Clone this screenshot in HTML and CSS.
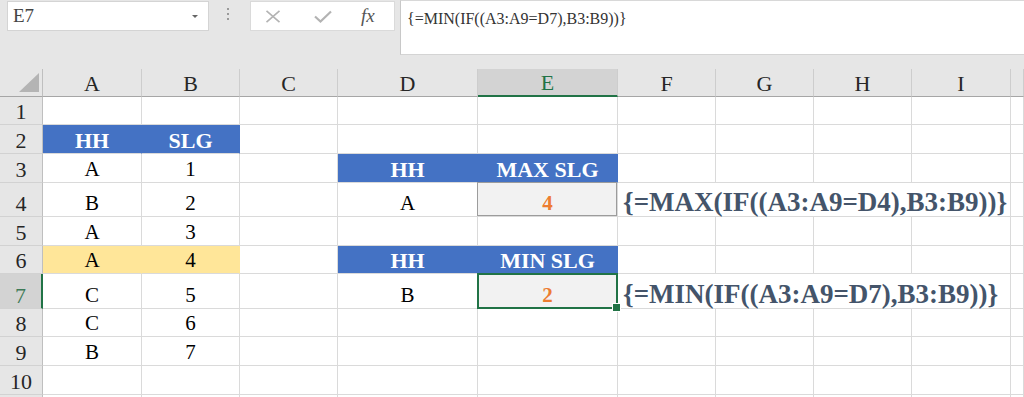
FILE: index.html
```html
<!DOCTYPE html>
<html>
<head>
<meta charset="utf-8">
<link rel="stylesheet" href="styles.css">
</head>
<body>
<div class="topbar">
  <div class="namebox"><span class="nb-text">E7</span><span class="nb-arrow"></span></div>
  <div class="grip"><i></i><i></i><i></i></div>
  <div class="fxbox">
    <svg class="ico-x" width="16" height="13" viewBox="0 0 16 13"><path d="M1.5 0.8 L14.5 12.2 M14.5 0.8 L1.5 12.2" stroke="#b3b3b3" stroke-width="1.6" fill="none"/></svg>
    <svg class="ico-ok" width="18" height="13" viewBox="0 0 18 13"><path d="M1 6.5 L6.5 11.5 L17 1.5" stroke="#b3b3b3" stroke-width="2.2" fill="none"/></svg>
    <span class="fx">fx</span>
  </div>
  <div class="formula">{=MIN(IF((A3:A9=D7),B3:B9))}</div>
</div>

<div class="sheet">
  <!-- header row -->
  <div class="ch corner"><span class="tri"></span></div>
  <div class="ch">A</div><div class="ch">B</div><div class="ch">C</div><div class="ch">D</div>
  <div class="ch ch-sel">E</div><div class="ch">F</div><div class="ch">G</div><div class="ch">H</div><div class="ch">I</div><div class="ch"></div>

  <!-- row 1 -->
  <div class="rh">1</div>
  <div class="c"></div><div class="c"></div><div class="c"></div><div class="c"></div><div class="c"></div><div class="c"></div><div class="c"></div><div class="c"></div><div class="c"></div><div class="c"></div>

  <!-- row 2 -->
  <div class="rh">2</div>
  <div class="c blue">HH</div><div class="c blue">SLG</div><div class="c"></div><div class="c"></div><div class="c"></div><div class="c"></div><div class="c"></div><div class="c"></div><div class="c"></div><div class="c"></div>

  <!-- row 3 -->
  <div class="rh">3</div>
  <div class="c">A</div><div class="c">1</div><div class="c"></div><div class="c blue">HH</div><div class="c blue">MAX SLG</div><div class="c"></div><div class="c"></div><div class="c"></div><div class="c"></div><div class="c"></div>

  <!-- row 4 -->
  <div class="rh">4</div>
  <div class="c">B</div><div class="c">2</div><div class="c"></div><div class="c">A</div><div class="c result boxed">4</div><div class="c fcell">{=MAX(IF((A3:A9=D4),B3:B9))}</div><div class="c"></div>

  <!-- row 5 -->
  <div class="rh">5</div>
  <div class="c">A</div><div class="c">3</div><div class="c"></div><div class="c"></div><div class="c"></div><div class="c"></div><div class="c"></div><div class="c"></div><div class="c"></div><div class="c"></div>

  <!-- row 6 -->
  <div class="rh">6</div>
  <div class="c yellow">A</div><div class="c yellow">4</div><div class="c"></div><div class="c blue">HH</div><div class="c blue">MIN SLG</div><div class="c"></div><div class="c"></div><div class="c"></div><div class="c"></div><div class="c"></div>

  <!-- row 7 -->
  <div class="rh rh-sel">7</div>
  <div class="c">C</div><div class="c">5</div><div class="c"></div><div class="c">B</div><div class="c result selected">2</div><div class="c fcell">{=MIN(IF((A3:A9=D7),B3:B9))}</div><div class="c"></div>

  <!-- row 8 -->
  <div class="rh">8</div>
  <div class="c">C</div><div class="c">6</div><div class="c"></div><div class="c"></div><div class="c"></div><div class="c"></div><div class="c"></div><div class="c"></div><div class="c"></div><div class="c"></div>

  <!-- row 9 -->
  <div class="rh">9</div>
  <div class="c">B</div><div class="c">7</div><div class="c"></div><div class="c"></div><div class="c"></div><div class="c"></div><div class="c"></div><div class="c"></div><div class="c"></div><div class="c"></div>

  <!-- row 10 -->
  <div class="rh">10</div>
  <div class="c"></div><div class="c"></div><div class="c"></div><div class="c"></div><div class="c"></div><div class="c"></div><div class="c"></div><div class="c"></div><div class="c"></div><div class="c"></div>

  <!-- row 11 (only its top edge is visible) -->
  <div class="rh"></div>
  <div class="c"></div><div class="c"></div><div class="c"></div><div class="c"></div><div class="c"></div><div class="c"></div><div class="c"></div><div class="c"></div><div class="c"></div><div class="c"></div>
</div>
</body>
</html>
```
FILE: styles.css
```css
* { box-sizing: border-box; }

body {
  margin: 0;
  width: 1024px;
  height: 397px;
  overflow: hidden;
  background: #ffffff;
  font-family: "Liberation Serif", "Times New Roman", serif;
}

/* ---------- top bar ---------- */
.topbar {
  height: 69px;
  background: #e6e6e6;
  display: flex;
  align-items: flex-start;
}

.namebox {
  margin: 1px 0 0 7px;
  width: 202px;
  height: 30px;
  background: #fff;
  border: 1px solid #d4d4d4;
  display: flex;
  align-items: center;
  justify-content: space-between;
  padding: 0 10px 0 5px;
}

.nb-text {
  font-size: 19px;
  color: #444;
  line-height: 20px;
}

.nb-arrow {
  width: 0;
  height: 0;
  border-left: 3px solid transparent;
  border-right: 3px solid transparent;
  border-top: 3px solid #666;
}

.grip {
  margin: 8px 0 0 17px;
  width: 4px;
  display: flex;
  flex-direction: column;
  gap: 3px;
  align-items: center;
}

.grip i {
  width: 2px;
  height: 2px;
  background: #9a9a9a;
}

.fxbox {
  margin: 1px 0 0 20px;
  width: 145px;
  height: 30px;
  background: #fff;
  border: 1px solid #dadada;
  display: flex;
  align-items: center;
  padding-left: 14px;
}

.ico-x { margin-top: 0; }
.ico-ok { margin-left: 33px; margin-top: 1px; }

.fx {
  margin-left: 29px;
  font-style: italic;
  font-size: 19px;
  color: #555;
  line-height: 20px;
}

.formula {
  margin-left: 5px;
  flex: 1;
  height: 55px;
  background: #fff;
  border-left: 1px solid #c8c8c8;
  border-bottom: 1px solid #d4d4d4;
  border-top: 1px solid #d8d8d8;
  padding: 8px 0 0 6px;
  font-size: 16px;
  line-height: 20px;
  color: #333;
  white-space: nowrap;
}

/* ---------- sheet ---------- */
.sheet {
  display: grid;
  grid-template-columns: 43px 99px 98px 98px 140px 140px 98px 98px 98px 99px 1fr;
  grid-template-rows: 28px 28px 29px 29px 34px 29px 28px 35px 28px 29px 29px 20px;
}

.c {
  border-right: 1px solid #dadada;
  border-bottom: 1px solid #dadada;
  display: flex;
  align-items: flex-end;
  justify-content: center;
  font-size: 21px;
  line-height: 21px;
  padding-bottom: 2px;
  color: #000;
  white-space: nowrap;
  position: relative;
}

.ch {
  background: #e6e6e6;
  border-right: 1px solid #cdcdcd;
  border-bottom: 1px solid #a6a6a6;
  display: flex;
  align-items: center;
  justify-content: center;
  font-size: 22px;
  line-height: 22px;
  padding-top: 2px;
  color: #262626;
}

.corner {
  position: relative;
  border-right-color: #bfbfbf;
}

.tri {
  position: absolute;
  right: 3px;
  bottom: 4px;
  width: 0;
  height: 0;
  border-left: 20px solid transparent;
  border-bottom: 19px solid #b4b4b4;
}

.ch-sel {
  background: #d3d3d3;
  color: #217346;
  border-bottom: 2px solid #217346;
}

.rh {
  background: #e6e6e6;
  border-right: 1px solid #bfbfbf;
  border-bottom: 1px solid #d2d2d2;
  display: flex;
  align-items: flex-end;
  justify-content: center;
  font-size: 22px;
  line-height: 22px;
  padding-bottom: 1px;
  color: #262626;
}

.rh-sel {
  background: #d3d3d3;
  color: #3d7a57;
  border-right: 2px solid #217346;
}

.blue {
  background: #4472c4;
  border-right-color: #4472c4;
  color: #fff;
  font-weight: bold;
  font-size: 22px;
}

.yellow {
  background: #ffe699;
  border-right-color: #ffe699;
}

.result {
  background: #f2f2f2;
  color: #ed7d31;
  font-weight: bold;
}

.boxed::after {
  content: "";
  position: absolute;
  top: -1px;
  left: -1px;
  right: 0;
  bottom: 0;
  border: 1px solid #9c9c9c;
}

.selected::after {
  content: "";
  position: absolute;
  top: -1px;
  left: -1px;
  right: -1px;
  bottom: -1px;
  border: 2px solid #217346;
}

.selected::before {
  content: "";
  position: absolute;
  right: -4px;
  bottom: -4px;
  width: 7px;
  height: 7px;
  background: #217346;
  border: 1px solid #fff;
  z-index: 2;
}

.fcell {
  grid-column: span 4;
  justify-content: flex-start;
  padding-left: 5px;
  padding-bottom: 0;
  font-size: 27px;
  line-height: 27px;
  font-weight: bold;
  color: #44546a;
  overflow: visible;
}
```
